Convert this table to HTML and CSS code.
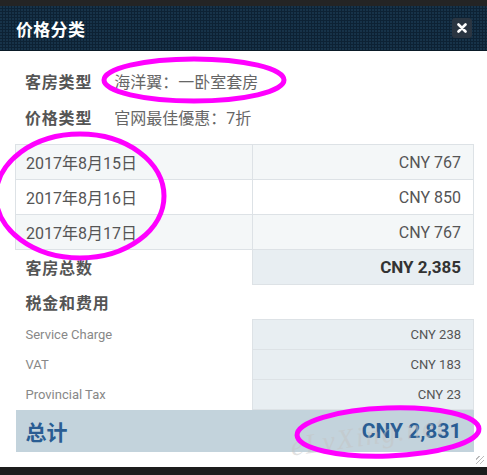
FILE: index.html
```html
<!DOCTYPE html>
<html lang="zh">
<head>
<meta charset="utf-8">
<title>价格分类</title>
<link rel="stylesheet" href="styles.css">
</head>
<body>
<div class="topbar"></div>
<div class="modal">
  <div class="modal-header">
    <h1 class="modal-title">价格分类</h1>
    <button class="close" type="button" aria-label="关闭">
      <svg width="10" height="10" viewBox="0 0 10 10"><path d="M1.5 1.5 L8.5 8.5 M8.5 1.5 L1.5 8.5" stroke="#fff" stroke-width="2.6" stroke-linecap="round"/></svg>
    </button>
  </div>
  <div class="modal-body">
    <div class="info">
      <div class="info-row"><span class="info-label">客房类型</span><span class="info-value">海洋翼：一卧室套房</span></div>
      <div class="info-row"><span class="info-label">价格类型</span><span class="info-value">官网最佳優惠：7折</span></div>
    </div>
    <table class="rates">
      <colgroup><col class="col-left"><col class="col-right"></colgroup>
      <tbody>
        <tr class="night alt"><td>2017年8月15日</td><td class="num">CNY 767</td></tr>
        <tr class="night"><td>2017年8月16日</td><td class="num">CNY 850</td></tr>
        <tr class="night alt"><td>2017年8月17日</td><td class="num">CNY 767</td></tr>
        <tr class="subtotal"><td class="plain">客房总数</td><td class="num">CNY 2,385</td></tr>
        <tr class="section"><td class="plain" colspan="2">税金和费用</td></tr>
        <tr class="fee"><td class="plain">Service Charge</td><td class="num">CNY 238</td></tr>
        <tr class="fee"><td class="plain">VAT</td><td class="num">CNY 183</td></tr>
        <tr class="fee"><td class="plain">Provincial Tax</td><td class="num">CNY 23</td></tr>
        <tr class="grand"><td>总计</td><td class="num">CNY 2,831</td></tr>
      </tbody>
    </table>
    <span class="grip"></span>
  </div>
  <span class="watermark">eLvXing.net</span>
  <svg class="marks" width="487" height="475" viewBox="0 0 487 475">
    <ellipse cx="194" cy="80" rx="90" ry="21" />
    <ellipse cx="80" cy="196" rx="84" ry="62" />
    <ellipse cx="388" cy="432" rx="91" ry="24" transform="rotate(-2 388 432)" />
  </svg>
</div>
<div class="bottombar"></div>
</body>
</html>
```
FILE: styles.css
```css
html, body {
  margin: 0;
  padding: 0;
  background: #fff;
}
body {
  width: 487px;
  height: 475px;
  overflow: hidden;
  font-family: Roboto, "Noto Sans CJK SC", sans-serif;
}
.topbar {
  height: 6px;
  background: #242424;
}
.modal {
  position: relative;
  background: #fff;
}
.modal-header {
  height: 45px;
  box-sizing: border-box;
  display: flex;
  align-items: center;
  justify-content: space-between;
  padding: 0 15px 0 16px;
  background-color: #0d2234;
  background-image: radial-gradient(circle at 1px 1px, #173349 0.9px, transparent 1.1px);
  background-size: 3px 3px;
  border-bottom: 1px solid #0a1a27;
}
.modal-title {
  margin: 0;
  font-family: "Noto Sans CJK SC", sans-serif;
  font-size: 17px;
  font-weight: 700;
  color: #fff;
  letter-spacing: 0.3px;
}
.close {
  width: 20px;
  height: 20px;
  padding: 0;
  border: 0;
  border-radius: 3px;
  background: #2a3541;
  display: flex;
  align-items: center;
  justify-content: center;
}
.modal-body {
  position: relative;
  padding: 12px 14px 15px 15px;
}
.info-row {
  height: 36px;
  display: flex;
  align-items: center;
  padding-left: 10px;
  font-size: 16px;
}
.info-label {
  font-weight: 700;
  color: #555;
  letter-spacing: 0.8px;
  margin-right: 22px;
}
.info-value {
  color: #666;
}
.rates {
  margin-top: 9px;
  width: 458px;
  border-collapse: collapse;
  table-layout: fixed;
}
.col-left { width: 237px; }
.col-right { width: 221px; }
.rates td {
  padding: 0 12px 0 10px;
  border: 1px solid #dde2e6;
  color: #555;
  font-size: 16px;
  white-space: nowrap;
}
.rates td.num {
  text-align: right;
}
.night td {
  height: 34px;
  background: #fff;
}
.night.alt td {
  background: #f4f7f8;
}
.rates td.plain {
  border: 0;
  background: transparent;
}
.subtotal td {
  height: 34px;
  font-weight: 700;
  color: #333;
  font-size: 17px;
}
.subtotal td.plain { color: #555; font-size: 16px; letter-spacing: 0.8px; }
.subtotal td.num { background: #e8eef2; }
.section td {
  height: 34px;
  font-weight: 700;
  color: #555;
  letter-spacing: 0.8px;
}
.fee td {
  height: 29px;
  font-size: 13px;
}
.fee td.plain { color: #888; }
.fee td.num { background: #e8eef2; color: #555; }
.grand td {
  height: 42px;
  background: #c3d3dc;
  border: 0;
  color: #2a5d93;
  font-size: 21px;
  font-weight: 700;
}
.grip {
  position: absolute;
  right: 3px;
  bottom: 3px;
  width: 8px;
  height: 8px;
  background: repeating-linear-gradient(135deg, transparent 0 2px, #bbb 2px 3px);
}
.watermark {
  position: absolute;
  left: 290px;
  top: 414px;
  font-family: "Liberation Serif", serif;
  font-style: italic;
  font-size: 28px;
  color: rgba(195, 195, 195, 0.5);
  transform: rotate(-8deg);
  letter-spacing: 2px;
  pointer-events: none;
}
.marks {
  position: absolute;
  left: 0;
  top: -6px;
  pointer-events: none;
}
.marks ellipse {
  fill: none;
  stroke: #ff00ff;
  stroke-width: 5;
}
.bottombar {
  height: 9px;
  background: #1c1c1c;
}
```
